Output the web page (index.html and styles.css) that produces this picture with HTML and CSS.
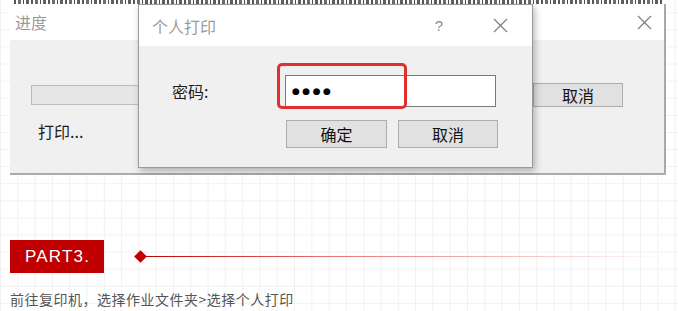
FILE: index.html
```html
<!DOCTYPE html>
<html lang="zh-CN">
<head>
<meta charset="utf-8">
<title>个人打印</title>
<link rel="stylesheet" href="styles.css">
</head>
<body>
<div class="page">
  <div class="shot">
    <div class="cutline"></div>
    <div class="win">
      <div class="win-title">
        <span class="win-name">进度</span>
        <svg class="x-icon" width="15" height="15" viewBox="0 0 15 15"><path d="M1 1L14 14M14 1L1 14" stroke="#7a7a7a" stroke-width="1.1" fill="none"/></svg>
      </div>
      <div class="win-body">
        <div class="win-row">
          <div class="progress"></div>
          <div class="btn btn-back">取消</div>
        </div>
        <div class="status">打印...</div>
      </div>
    </div>
    <div class="dlg">
      <div class="dlg-title">
        <span class="dlg-name">个人打印</span>
        <span class="help">?</span>
        <svg class="x-icon" width="15" height="15" viewBox="0 0 15 15"><path d="M1 1L14 14M14 1L1 14" stroke="#7a7a7a" stroke-width="1.1" fill="none"/></svg>
      </div>
      <div class="dlg-body">
        <div class="field">
          <span class="label">密码:</span>
          <div class="input">●●●●</div>
        </div>
        <div class="actions">
          <div class="btn">确定</div>
          <div class="btn">取消</div>
        </div>
      </div>
      <div class="mark"></div>
    </div>
  </div>

  <div class="part">
    <div class="badge">PART3.</div>
    <div class="diamond"></div>
    <div class="rule"></div>
  </div>
  <p class="caption">前往复印机，选择作业文件夹&gt;选择个人打印</p>
</div>
</body>
</html>
```
FILE: styles.css
```css
html, body {
  margin: 0;
  padding: 0;
}
body {
  width: 678px;
  height: 311px;
  overflow: hidden;
  background-color: #fff;
  background-image:
    linear-gradient(#f1f1f1 1px, transparent 1px),
    linear-gradient(90deg, #f1f1f1 1px, transparent 1px);
  background-size: 17.3px 17.1px, 17.3px 17.1px;
  background-position: 0 12.3px, 0 0;
  font-family: "Noto Sans CJK SC", "Noto Sans", sans-serif;
}
.page {
  padding-left: 10px;
  padding-right: 13px;
}
.shot {
  position: relative;
  width: 656px;
  height: 175px;
  overflow: hidden;
  background: #fff;
}
.cutline {
  height: 4px;
  margin-left: 4px;
  width: 648px;
  background-color: #fff;
  background-image:
    repeating-linear-gradient(90deg, #3a3a3a 0 2px, transparent 2px 4px, #555 4px 7px, transparent 7px 9px, #2e2e2e 9px 10px, transparent 10px 12px, #444 12px 15px, transparent 15px 17px),
    linear-gradient(#fff 0 1px, transparent 1px 3px, #fff 3px);
  background-size: 17px 4px, 100% 4px;
  opacity: 0.85;
}
.win {
  width: 654px;
  border-right: 2px solid #a9a9a9;
  border-bottom: 2px solid #ababab;
}
.win-title {
  height: 36px;
  background: #fff;
  display: flex;
  align-items: center;
  justify-content: space-between;
  padding: 0 12px 0 5px;
}
.win-name, .dlg-name {
  font-size: 16px;
  line-height: 20px;
  color: #9b9b9b;
}
.x-icon {
  display: block;
}
.win-body {
  height: 133px;
  background: #f0f0f0;
  box-sizing: border-box;
  padding: 43px 0 0 21px;
}
.win-row {
  display: flex;
  align-items: center;
  gap: 22px;
}
.progress {
  width: 480px;
  height: 20px;
  box-sizing: border-box;
  background: #e6e6e6;
  border: 1px solid #bcbcbc;
}
.btn {
  box-sizing: border-box;
  width: 101px;
  height: 28px;
  background: #e1e1e1;
  border: 1px solid #adadad;
  display: flex;
  align-items: center;
  justify-content: center;
  font-size: 16px;
  color: #111;
}
.btn-back {
  width: 90px;
  height: 24px;
}
.status {
  margin: 14px 0 0 7px;
  font-size: 16px;
  line-height: 20px;
  color: #1c1c1c;
}
.dlg {
  position: absolute;
  left: 128px;
  top: 4px;
  width: 395px;
  height: 164px;
  box-sizing: border-box;
  border: 1px solid #9a9a9a;
  background: #f0f0f0;
  box-shadow: 2px 3px 7px rgba(0, 0, 0, 0.28);
}
.dlg-title {
  height: 41px;
  background: #fff;
  display: flex;
  align-items: center;
  padding: 0 24px 0 13px;
}
.dlg-name {
  flex: 1;
}
.help {
  font-size: 15px;
  line-height: 20px;
  color: #8a8a8a;
  margin-right: 50px;
  font-family: "Liberation Sans", sans-serif;
}
.dlg-body {
  padding: 29px 0 0 33px;
}
.field {
  display: flex;
  align-items: center;
}
.label {
  width: 113px;
  font-size: 16px;
  line-height: 20px;
  color: #1c1c1c;
}
.input {
  box-sizing: border-box;
  width: 211px;
  height: 32px;
  background: #fff;
  border: 1px solid #7a7a7a;
  padding-left: 6px;
  display: flex;
  align-items: center;
  font-size: 9px;
  letter-spacing: 2.5px;
  color: #000;
  font-family: "DejaVu Sans", sans-serif;
}
.actions {
  display: flex;
  gap: 11px;
  margin: 13px 0 0 114px;
}
.actions .btn:last-child {
  width: 100px;
}
.mark {
  position: absolute;
  left: 138px;
  top: 58px;
  width: 130px;
  height: 46px;
  box-sizing: border-box;
  border: 3px solid #e0302e;
  border-radius: 5px;
}
.part {
  display: flex;
  align-items: center;
  margin-top: 65px;
}
.badge {
  box-sizing: border-box;
  width: 94px;
  height: 33px;
  padding-left: 15px;
  background: #c00000;
  color: #fff;
  font-family: "Liberation Sans", sans-serif;
  font-size: 17px;
  letter-spacing: 1.2px;
  line-height: 33px;
}
.diamond {
  width: 9px;
  height: 9px;
  margin-left: 32px;
  background: #c00000;
  transform: rotate(45deg);
}
.rule {
  flex: 1;
  height: 1px;
  background: linear-gradient(90deg, #c00000, rgba(224, 80, 80, 0.8) 35%, rgba(230, 100, 100, 0) 100%);
}
.caption {
  margin: 16px 0 0;
  font-size: 14px;
  line-height: 20px;
  letter-spacing: 0.5px;
  color: #555;
}
```
